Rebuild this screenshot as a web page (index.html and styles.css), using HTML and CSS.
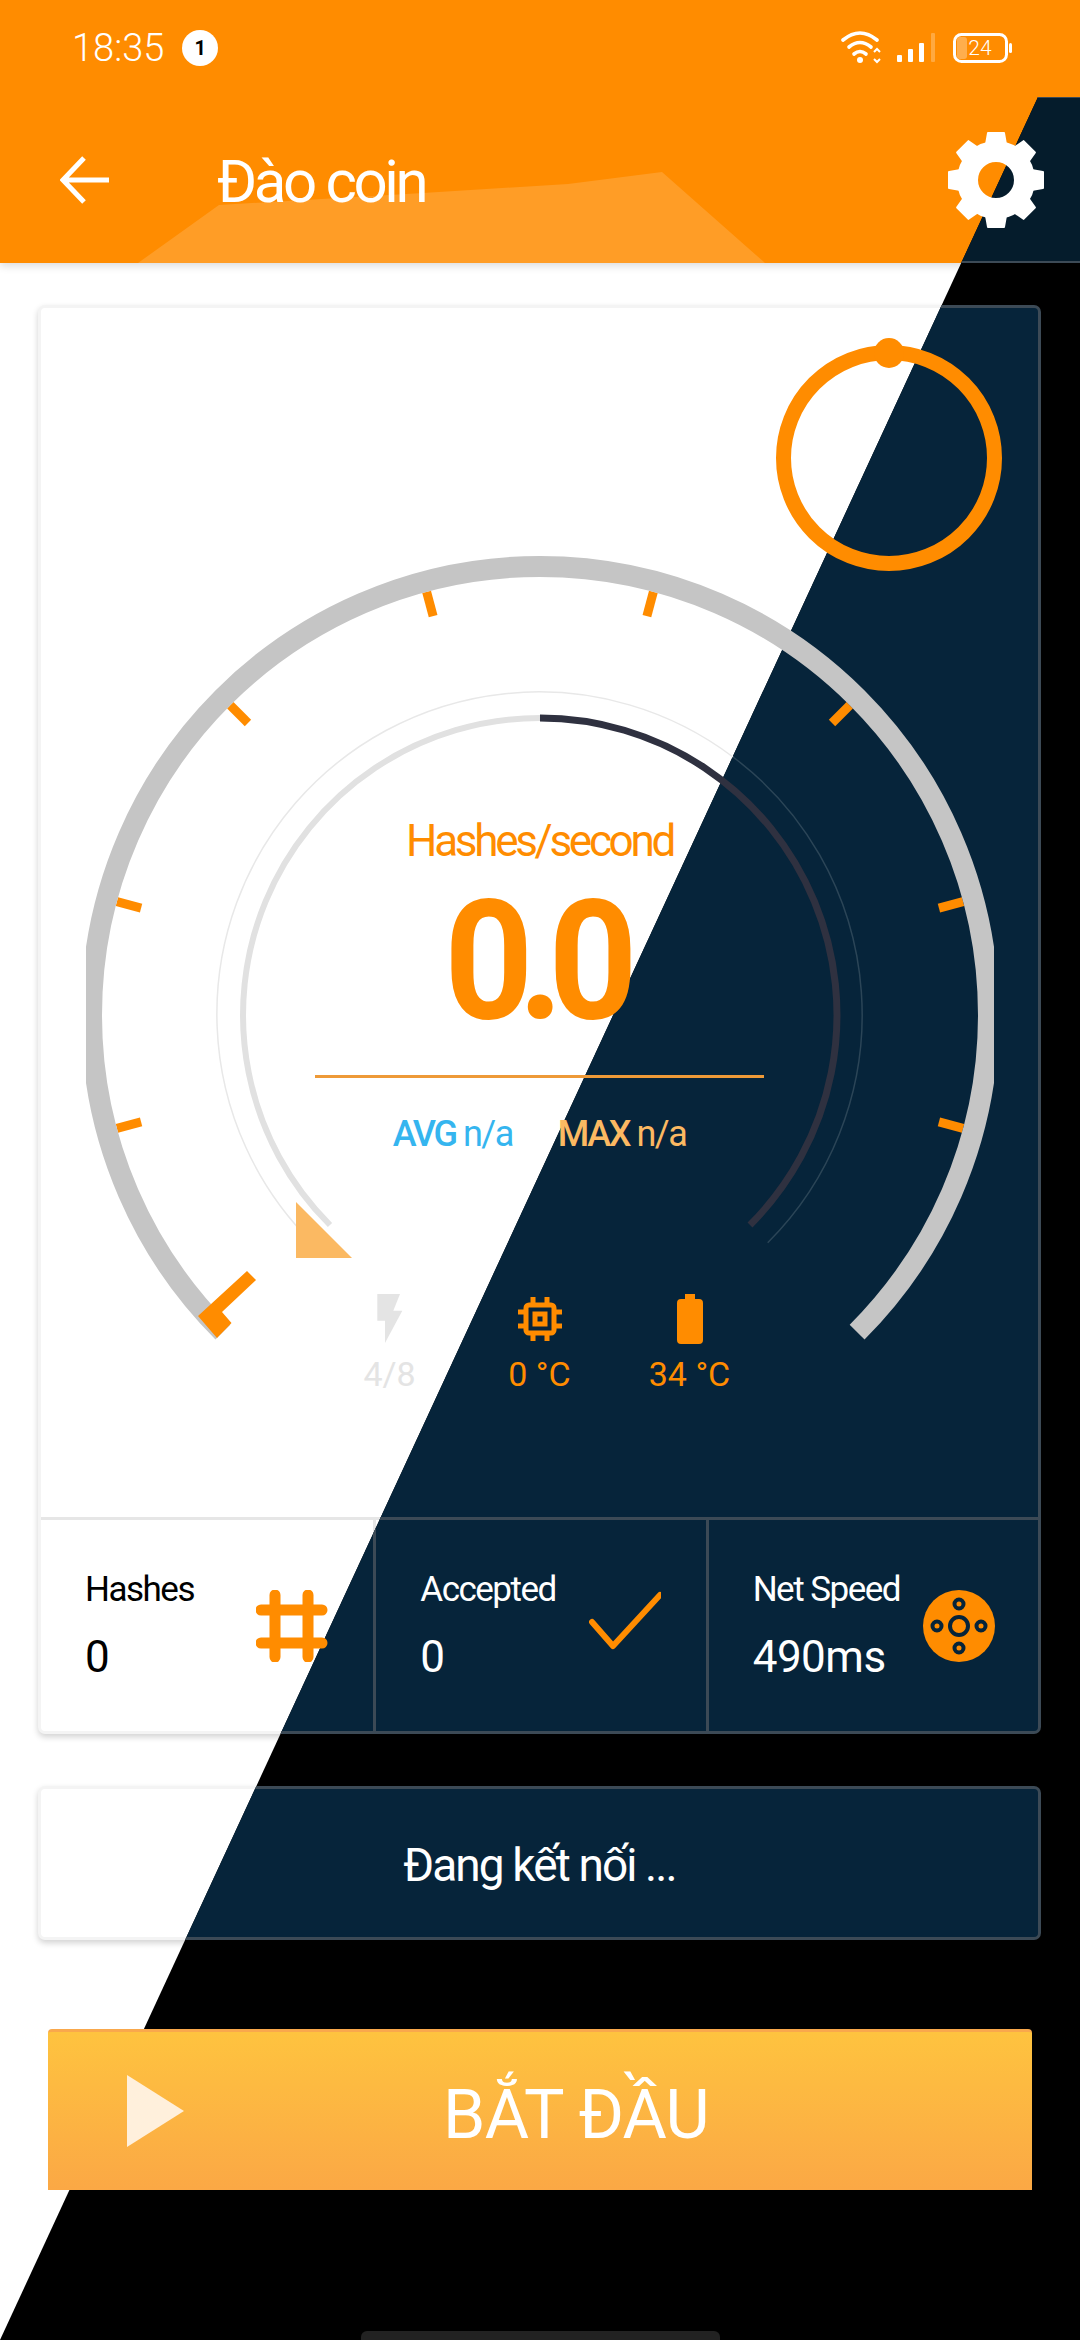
FILE: index.html
```html
<!DOCTYPE html>
<html lang="vi">
<head>
<meta charset="utf-8">
<title>Đào coin</title>
<link rel="stylesheet" href="styles.css">
</head>
<body>
<div class="screen">
  <header class="header">
    <div class="statusbar">
      <span class="time">18:35</span>
      <span class="badge">1</span>
      <svg class="status-icons" viewBox="840 30 175 35" width="175" height="35">
        <g class="st-line">
          <path d="M843 40Q860 26 877 40"/>
          <path d="M849 47Q860 38 871 47"/>
          <path d="M854 54Q860 49 866 54"/>
        </g>
        <circle class="st-fill" cx="860" cy="60" r="3"/>
        <path class="st-thin" d="M874 52L877 49L880 52M874 59L877 62L880 59"/>
        <rect class="st-fill" x="897" y="55" width="5" height="7" rx="1"/>
        <rect class="st-fill" x="908" y="49" width="5" height="13" rx="1"/>
        <rect class="st-fill" x="919" y="43" width="5" height="19" rx="1"/>
        <rect class="st-faint" x="931" y="33" width="4" height="29" rx="1"/>
        <rect class="st-batt" x="954.5" y="34.5" width="52" height="27" rx="7"/>
        <rect class="st-level" x="957" y="37" width="10" height="22" rx="3"/>
        <rect class="st-fill" x="1009" y="43" width="3" height="10" rx="1.5"/>
        <text class="st-text" x="980" y="55" text-anchor="middle">24</text>
      </svg>
    </div>
    <div class="bar">
      <svg class="hill" viewBox="0 97 1080 166" width="1080" height="166">
        <polygon points="138,263 219,205 423,193 568,184 662,172 765,263"/>
      </svg>
      <svg class="back over" viewBox="0 0 49 48" width="49" height="48">
        <path d="M49 24H4M24 2L3 24L24 46"/>
      </svg>
      <h1 class="title over">Đào coin</h1>
      <svg class="gear over" viewBox="947 131 98 98" width="98" height="98">
        <defs>
          <path id="tooth" d="M984 150L987 133Q987 132 988 132H1004Q1005 132 1005 133L1008 150Z"/>
        </defs>
        <circle class="gear-ring" cx="996" cy="180" r="28.5"/>
        <use href="#tooth"/>
        <use href="#tooth" transform="rotate(45 996 180)"/>
        <use href="#tooth" transform="rotate(90 996 180)"/>
        <use href="#tooth" transform="rotate(135 996 180)"/>
        <use href="#tooth" transform="rotate(180 996 180)"/>
        <use href="#tooth" transform="rotate(225 996 180)"/>
        <use href="#tooth" transform="rotate(270 996 180)"/>
        <use href="#tooth" transform="rotate(315 996 180)"/>
      </svg>
    </div>
  </header>

  <main class="main">
    <section class="card">
      <div class="card-body gauge">
        <svg class="gauge-art" viewBox="41 308 997 1209" width="997" height="1209">
          <defs>
            <clipPath id="gaugeClip"><rect x="86" y="500" width="908" height="900"/></clipPath>
          </defs>
          <g class="ticks">
            <line x1="540" y1="577" x2="540" y2="602" transform="rotate(-105 540 1015)"/>
            <line x1="540" y1="577" x2="540" y2="602" transform="rotate(-75 540 1015)"/>
            <line x1="540" y1="577" x2="540" y2="602" transform="rotate(-45 540 1015)"/>
            <line x1="540" y1="577" x2="540" y2="602" transform="rotate(-15 540 1015)"/>
            <line x1="540" y1="577" x2="540" y2="602" transform="rotate(15 540 1015)"/>
            <line x1="540" y1="577" x2="540" y2="602" transform="rotate(45 540 1015)"/>
            <line x1="540" y1="577" x2="540" y2="602" transform="rotate(75 540 1015)"/>
            <line x1="540" y1="577" x2="540" y2="602" transform="rotate(105 540 1015)"/>
          </g>
          <path class="arc-outer" clip-path="url(#gaugeClip)" d="M222.9 1332.1A448.5 448.5 0 1 1 857.1 1332.1"/>
          <path class="thin-light" d="M312.3 1242.7A322 322 0 0 1 733 757"/>
          <path class="thin-dark" d="M733 757A322 322 0 0 1 767.7 1242.7"/>
          <path class="inner-light" d="M330 1225A297 297 0 0 1 540 718"/>
          <path class="inner-dark" d="M540 718A297 297 0 0 1 750 1225"/>
          <polygon class="pointer" points="296,1202 352,1258 296,1258"/>
          <polygon class="needle" points="198,1316 247,1271 256,1280 222,1312 231.5,1323 217,1338"/>
          <circle class="ring" cx="889" cy="458" r="105.5"/>
          <circle class="ring-dot" cx="889" cy="353" r="15"/>
        </svg>
        <div class="hs-label over">Hashes/second</div>
        <div class="hs-value over">0.0</div>
        <div class="hs-rule over"></div>
        <div class="hs-stats over">
          <span class="avg"><b>AVG</b> n/a</span>
          <span class="max"><b>MAX</b> n/a</span>
        </div>
        <div class="temps over">
          <div class="temp temp-off">
            <svg viewBox="0 0 26 50" width="26" height="50"><polygon points="0.3,0 23,0 16.3,16.7 25.3,16.7 8,49 8,26.7 0.3,26.7"/></svg>
            <span>4/8</span>
          </div>
          <div class="temp">
            <svg viewBox="0 0 46 50" width="46" height="50">
              <g class="chip" transform="translate(0 2)">
                <rect x="9" y="9" width="28" height="28" rx="3"/>
                <rect x="18" y="18" width="10" height="10"/>
                <path d="M16 1V8M30 1V8M16 38V45M30 38V45M1 16H8M1 30H8M38 16H45M38 30H45"/>
              </g>
            </svg>
            <span>0 °C</span>
          </div>
          <div class="temp">
            <svg viewBox="0 0 26 50" width="26" height="50">
              <path d="M8 0H18V5H22Q26 5 26 9V46Q26 50 22 50H4Q0 50 0 46V9Q0 5 4 5H8Z"/>
            </svg>
            <span>34 °C</span>
          </div>
        </div>
      </div>
      <div class="stats">
        <div class="cell">
          <div class="cell-text over light-text">
            <div class="cell-label">Hashes</div>
            <div class="cell-value">0</div>
          </div>
          <svg class="cell-icon over" viewBox="0 0 72 72" width="72" height="72">
            <path class="hash" d="M19 5V67M52 5V67M5 20H66M5 53H66"/>
          </svg>
        </div>
        <div class="cell">
          <div class="cell-text over">
            <div class="cell-label">Accepted</div>
            <div class="cell-value">0</div>
          </div>
          <svg class="cell-icon over" viewBox="0 0 72 72" width="72" height="72">
            <path class="check" d="M3 32L24 56L71 5"/>
          </svg>
        </div>
        <div class="cell">
          <div class="cell-text over">
            <div class="cell-label">Net Speed</div>
            <div class="cell-value">490ms</div>
          </div>
          <svg class="cell-icon over" viewBox="0 0 72 72" width="72" height="72">
            <circle class="net-bg" cx="36" cy="36" r="36"/>
            <g class="net-dots">
              <circle cx="36" cy="36" r="9"/>
              <circle cx="36" cy="14" r="4.5"/>
              <circle cx="36" cy="58" r="4.5"/>
              <circle cx="14" cy="36" r="4.5"/>
              <circle cx="58" cy="36" r="4.5"/>
            </g>
          </svg>
        </div>
      </div>
    </section>
    <section class="card status-card">
      <span class="status-text over">Đang kết nối ...</span>
    </section>
    <button class="start over">
      <svg class="play" viewBox="0 0 57 72" width="57" height="72"><polygon points="0,0 57,36 0,72"/></svg>
      <span class="start-text">BẮT ĐẦU</span>
    </button>
  </main>
  <div class="home over"></div>

  <div class="dark-layer" aria-hidden="true">
    <div class="bar"></div>
    <div class="main">
      <div class="card">
        <div class="card-body"></div>
        <div class="stats">
          <div class="cell"></div>
          <div class="cell"></div>
          <div class="cell"></div>
        </div>
      </div>
      <div class="card status-card"></div>
    </div>
  </div>
</div>
</body>
</html>
```

FILE: styles.css
```css
* { box-sizing: border-box; }
html, body { margin: 0; padding: 0; }
body { background: #fff; font-family: Roboto, "Noto Sans", sans-serif; }

.screen {
  position: relative;
  width: 1080px;
  height: 2340px;
  overflow: hidden;
  background: #fff;
  color: #000;
}
.over { position: relative; z-index: 2; }

/* header */
.header { background: #ff8c00; box-shadow: 0 3px 8px rgba(0,0,0,.14); }
.statusbar {
  height: 97px;
  display: flex;
  align-items: center;
  padding: 0 65px 2px 72px;
  color: #fff;
}
.time { font-size: 38px; font-weight: 300; line-height: 40px; }
.badge {
  margin-left: 18px;
  width: 36px;
  height: 36px;
  border-radius: 50%;
  background: #fff;
  color: #000;
  font-size: 20px;
  font-weight: 700;
  line-height: 36px;
  text-align: center;
}
.status-icons { margin-left: auto; }
.st-line { fill: none; stroke: #fff; stroke-width: 3.6; stroke-linecap: round; }
.st-thin { fill: none; stroke: #fff; stroke-width: 2; }
.st-fill { fill: #fff; }
.st-faint { fill: #fff; opacity: .25; }
.st-batt { fill: none; stroke: #fff; stroke-width: 3; }
.st-level { fill: #fff; opacity: .3; }
.st-text { fill: #fff; font-size: 21px; font-weight: 300; font-family: Roboto, sans-serif; }

.bar {
  position: relative;
  height: 166px;
  display: flex;
  align-items: center;
  padding: 0 35px 0 60px;
}
.hill { position: absolute; left: 0; top: 0; fill: #ff9d26; }
.back { fill: none; stroke: #fff; stroke-width: 5; flex: none; }
.title {
  margin: 4px 0 0 108px;
  font-size: 60px;
  font-weight: 400;
  letter-spacing: -3.4px;
  line-height: 66px;
  color: #fff;
}
.gear { margin-left: auto; fill: #fff; flex: none; }
.gear-ring { fill: none; stroke: #fff; stroke-width: 21; }

/* main flow */
.main { padding: 42px 39px 0 38px; }
.card {
  border: 3px solid #f4f4f4;
  border-radius: 7px;
  background: #fff;
  box-shadow: 0 3px 6px rgba(0,0,0,.18);
}
.card-body { height: 1209px; }
.gauge {
  display: flex;
  flex-direction: column;
  align-items: center;
  padding-top: 508px;
  position: relative;
}
.gauge-art { position: absolute; left: 0; top: 0; z-index: 2; }
.ticks line { stroke: #ff8c00; stroke-width: 9; }
.arc-outer { fill: none; stroke: #c5c5c5; stroke-width: 21; }
.thin-light { fill: none; stroke: #e8e8e8; stroke-width: 1.5; }
.thin-dark { fill: none; stroke: #2b4557; stroke-width: 1.5; }
.inner-light { fill: none; stroke: #e1e1e1; stroke-width: 6; }
.inner-dark { fill: none; stroke: #2f3140; stroke-width: 7; }
.pointer { fill: #fbb962; }
.needle { fill: #ff8c00; }
.ring { fill: none; stroke: #ff8c00; stroke-width: 15; }
.ring-dot { fill: #ff8c00; }

.hs-label {
  font-size: 44px;
  line-height: 50px;
  letter-spacing: -3.3px;
  color: #ff8c00;
  font-weight: 400;
}
.hs-value {
  margin-top: 30px;
  font-size: 167px;
  line-height: 130px;
  font-weight: 700;
  letter-spacing: -16px;
  padding-left: 4px;
  padding-right: 16px;
  color: #ff8c00;
  transform: scaleX(.93);
}
.hs-rule { margin-top: 49px; width: 449px; height: 3px; background: #ee9a38; }
.hs-stats {
  margin-top: 34px;
  display: flex;
  gap: 45px;
  font-size: 36px;
  line-height: 44px;
  letter-spacing: -1.5px;
}
.hs-stats b { font-weight: 500; letter-spacing: -2.4px; }
.avg { color: #35b5ef; }
.max { color: #fbb962; }

.temps { margin-top: 138px; display: flex; }
.temp {
  width: 150px;
  display: flex;
  flex-direction: column;
  align-items: center;
  gap: 10px;
  color: #ff8c00;
  fill: #ff8c00;
  font-size: 34px;
  line-height: 40px;
}
.temp-off { color: #e4e4e4; fill: #e4e4e4; }
.chip { fill: none; stroke: #ff8c00; stroke-width: 5; }

/* stats */
.stats {
  height: 214px;
  display: grid;
  grid-template-columns: repeat(3, 1fr);
  border-top: 3px solid #e6e6e6;
}
.cell {
  display: flex;
  align-items: center;
  justify-content: space-between;
  padding: 0 45px 0 44px;
}
.cell:last-child { padding-right: 43px; }
.cell + .cell { border-left: 3px solid #e6e6e6; }
.cell-text { color: #fff; }
.light-text { color: #000; }
.cell-label { font-size: 35px; line-height: 40px; letter-spacing: -1.5px; padding-top: 1px; }
.cell-value { margin-top: 22px; font-size: 44px; line-height: 50px; letter-spacing: -.5px; }
.cell-icon { flex: none; }
.hash { fill: none; stroke: #ff8c00; stroke-width: 11; stroke-linecap: round; }
.check { fill: none; stroke: #ff8c00; stroke-width: 6; stroke-linejoin: round; stroke-linecap: round; }
.net-bg { fill: #ff8c00; }
.net-dots circle { fill: none; stroke: #06243a; stroke-width: 4; }

/* status card */
.status-card {
  margin-top: 52px;
  height: 154px;
  display: flex;
  align-items: center;
  justify-content: center;
  padding-top: 4px;
}
.status-text { font-size: 46px; line-height: 54px; letter-spacing: -1.9px; color: #fff; }

/* start */
.start {
  display: flex;
  align-items: center;
  width: 984px;
  height: 161px;
  margin: 89px 0 0 10px;
  padding: 0 64px 0 79px;
  border: 0;
  border-top: 3px solid #f9a84c;
  border-radius: 4px 4px 0 0;
  background: linear-gradient(#fec33f, #fba845);
  color: #fff;
  font-family: inherit;
}
.play { flex: none; fill: #fff0dc; }
.start-text { flex: 1; text-align: center; font-size: 68px; line-height: 80px; letter-spacing: -.8px; padding-top: 8px; }

.home {
  position: absolute;
  left: 361px;
  bottom: 0;
  width: 359px;
  height: 9px;
  border-radius: 6px 6px 0 0;
  background: #222;
}

/* dark half */
.dark-layer {
  position: absolute;
  inset: 0;
  z-index: 1;
  background: #000;
  clip-path: polygon(1038px 97px, 1080px 97px, 1080px 2340px, 0 2340px);
  padding-top: 97px;
}
.dark-layer .bar { background: #051c2c; border-top: 1px solid #3c4a56; border-bottom: 2px solid #3c4a56; }
.dark-layer .card { background: #06243a; border-color: #3c4a56; box-shadow: none; }
.dark-layer .stats { border-top-color: #3c4a56; }
.dark-layer .cell + .cell { border-left-color: #3c4a56; }
```
